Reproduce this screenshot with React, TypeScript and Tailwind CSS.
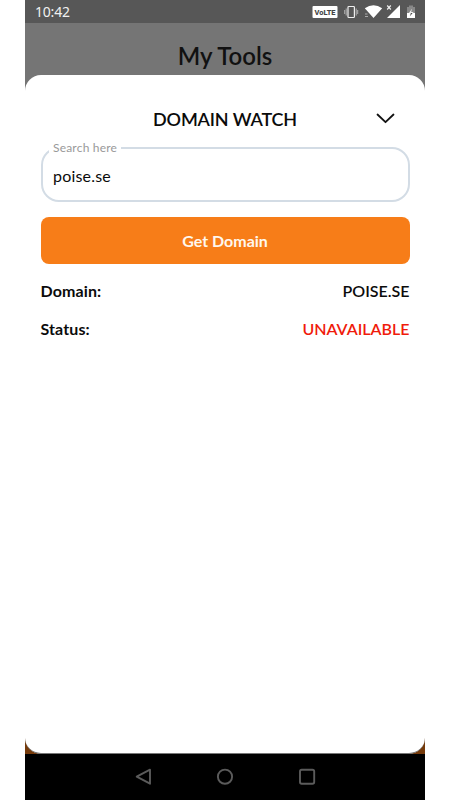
function StatusIcons() {
  return (
    <svg width="106" height="20" viewBox="312 2 106 20" fill="none" aria-hidden="true">
      <rect x="312.5" y="6" width="25" height="12" rx="1" fill="#fff" />
      <text x="325" y="15" textAnchor="middle" textLength="21" lengthAdjust="spacingAndGlyphs" fontFamily="Roboto, sans-serif" fontSize="8" fontWeight="800" fill="#444">VoLTE</text>
      <rect x="348" y="6.5" width="6.4" height="11" rx="0.8" stroke="#eee" strokeWidth="1.2" />
      <path d="M346.2 8.5v7M356.2 8.5v7M344.7 10v4M357.7 10v4" stroke="#bbb" strokeWidth="0.9" />
      <path d="M364.8 8.2Q373.5 2.2 382.2 8.2L373.5 18Z" fill="#fff" />
      <path d="M365 14h2.5M365 16.5h3" stroke="#aaa" strokeWidth="1" />
      <path d="M400 5V18H387Z" fill="#fff" />
      <path d="M387.2 5.5l3.6 4M390.8 5.5l-3.6 4" stroke="#eee" strokeWidth="1.2" />
      <path d="M409 5.5h4V7h2v6h-8V7h2Z" fill="#888" />
      <path d="M407 13h8v5h-8Z" fill="#fff" />
      <path d="M412 8.5l-3.2 4.5h2l-.8 3.3 3.4-4.4h-2Z" fill="#444" />
      <path d="M412 8.5l-3.2 4.5h4.4l.2-.9h-2Z" fill="#eee" />
    </svg>
  );
}

function NavIcons() {
  return (
    <svg width="184" height="20" viewBox="134 767 184 20" fill="none" stroke="#5b5b5b" strokeWidth="1.9" strokeLinejoin="round" aria-hidden="true">
      <path d="M150 769.7V783.7L136.7 776.7Z" />
      <circle cx="225" cy="776.7" r="7.1" />
      <rect x="300" y="769.7" width="14.2" height="14" rx="1.7" />
    </svg>
  );
}

function Row({ label, value, tone }: { label: string; value: string; tone: string }) {
  return (
    <div className="flex h-6 items-center justify-between text-[16px] leading-6">
      <span className="font-bold tracking-[0.12px]">{label}</span>
      <span className={tone}>{value}</span>
    </div>
  );
}

export default function App() {
  return (
    <div className="flex h-[800px] w-[450px] justify-center overflow-hidden bg-white font-['Lato',sans-serif] text-[#0b0b0b]">
      <main className="flex w-[400px] flex-col bg-[#753a0b]">
        <div className="flex h-[23px] shrink-0 items-center justify-between bg-[#575757] pr-[7px] pl-[10px]">
          <span className="font-['Noto_Sans',sans-serif] text-[14px] leading-5 tracking-[-0.2px] text-[#f0f0f0]">10:42</span>
          <StatusIcons />
        </div>
        <header className="-mb-5 flex h-[72px] shrink-0 justify-center bg-[#757575] pt-[17px]">
          <h1 className="text-[24px] leading-[32px] font-semibold text-[#111]">My Tools</h1>
        </header>
        <section className="flex min-h-0 flex-1 flex-col rounded-[16px] border-b border-[#777] bg-white px-[15.5px] pt-[30px]">
          <div className="relative flex h-7 items-center justify-center">
            <h2 className="text-[18px] leading-7 font-semibold tracking-[-0.15px]">DOMAIN WATCH</h2>
            <svg className="absolute top-[8px] right-[14.5px]" width="19" height="12" viewBox="0 0 19 12" fill="none" stroke="#111" strokeWidth="1.8" strokeLinecap="round" strokeLinejoin="round" aria-hidden="true">
              <path d="M1.5 1.5L9.5 9.2L17.5 1.5" />
            </svg>
          </div>
          <div className="relative mt-[14px] flex h-[55px] items-center rounded-[18px] border-2 border-[#d3dce5] px-[10.5px] pt-[2px]">
            <label className="absolute top-[-9px] left-[6.5px] bg-white px-1 text-[12px] leading-4 tracking-[0.2px] text-[#999]">Search here</label>
            <span className="text-[16px] leading-6 tracking-[0.2px]">poise.se</span>
          </div>
          <button className="mt-[15px] flex h-[47px] items-center justify-center rounded-[8px] bg-[#f77d18] text-[16px] leading-6 font-bold text-[#fff7ed]">Get Domain</button>
          <div className="mt-[15px] flex flex-col gap-[14px]">
            <Row label="Domain:" value="POISE.SE" tone="font-semibold" />
            <Row label="Status:" value="UNAVAILABLE" tone="font-semibold text-[#f01b0b]" />
          </div>
        </section>
        <nav className="flex h-[46px] shrink-0 items-center justify-center bg-black pl-[2px]">
          <NavIcons />
        </nav>
      </main>
    </div>
  );
}
